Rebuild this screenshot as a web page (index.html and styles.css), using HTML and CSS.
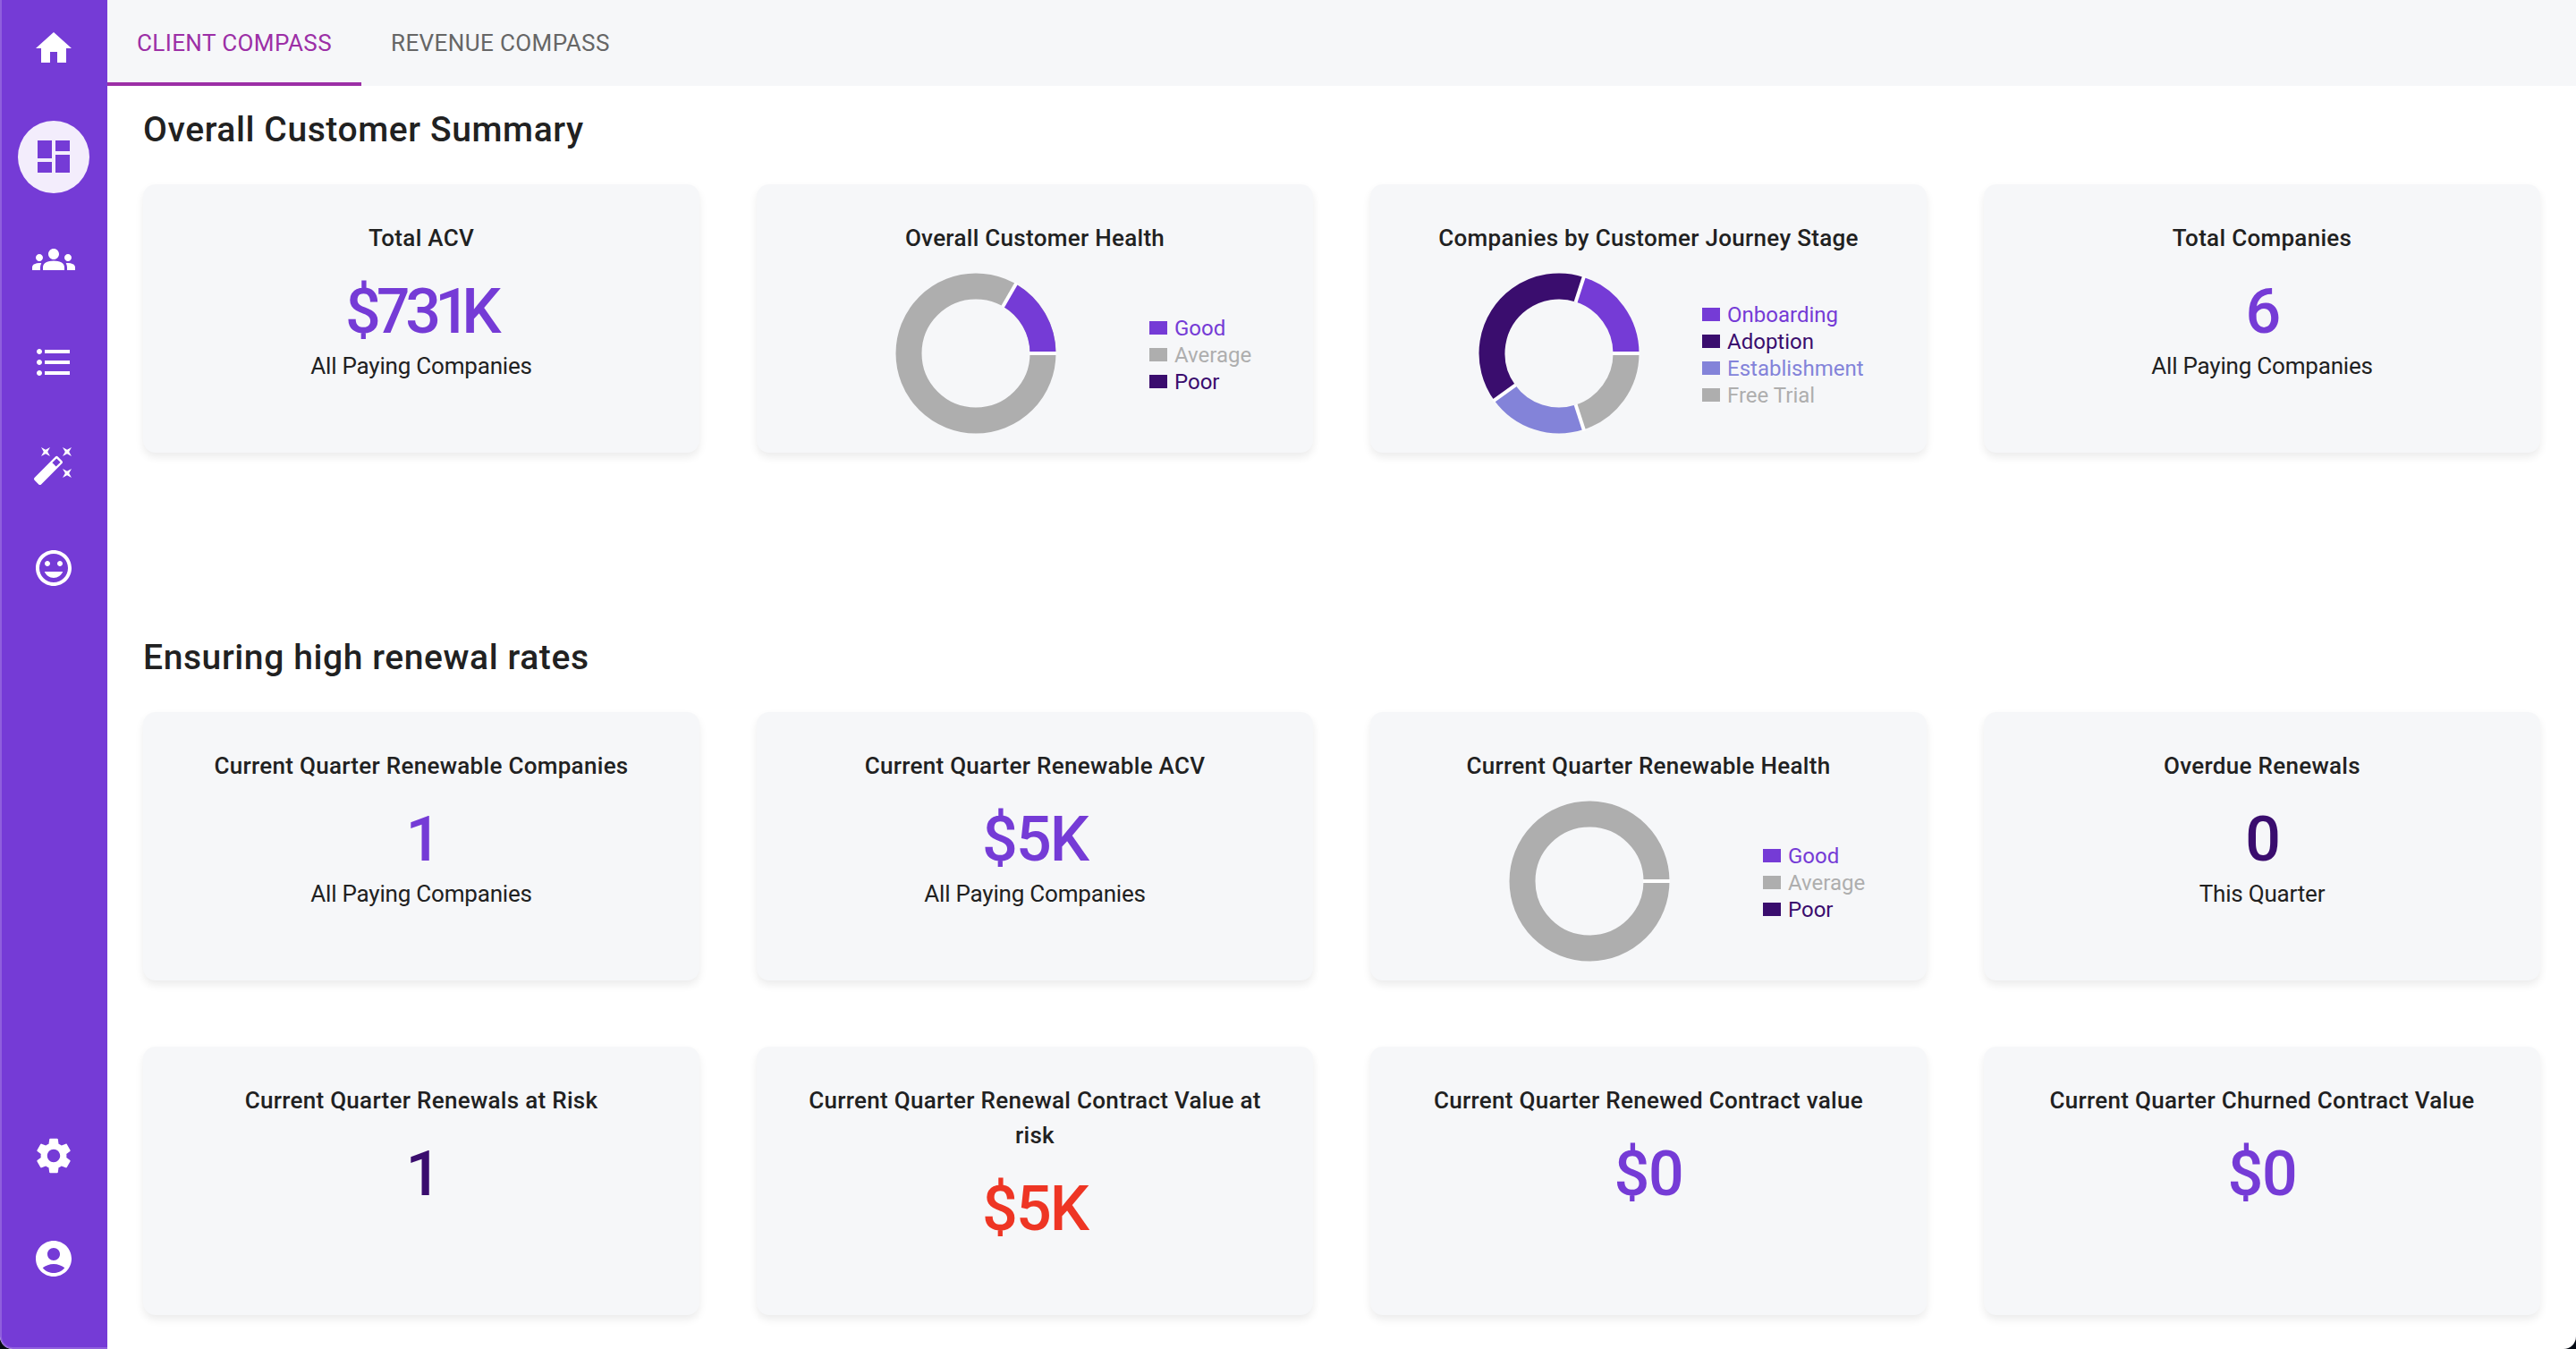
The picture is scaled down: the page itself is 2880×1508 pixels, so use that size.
FILE: index.html
```html
<!DOCTYPE html>
<html>
<head>
    <title>Client Compass</title>
    <link rel="stylesheet" href="styles.css">
</head>
<body>
<div class="app">
    <nav class="sidebar">
        <div class="nav-group">
            <a class="nav-home"><svg class="icon" viewBox="0 0 24 24"><path d="M10 20v-6h4v6h5v-8h3L12 3 2 12h3v8z"/></svg></a>
            <a class="nav-item nav-first"><span class="nav-active"><svg class="icon" viewBox="0 0 24 24"><path d="M3 13h8V3H3v10zm0 8h8v-6H3v6zm10 0h8V11h-8v10zm0-18v6h8V3h-8z"/></svg></span></a>
            <a class="nav-item"><svg class="icon" viewBox="0 0 24 24"><path d="M12 12.75c1.63 0 3.07.39 4.24.9 1.08.48 1.76 1.56 1.76 2.73V18H6v-1.61c0-1.18.68-2.26 1.76-2.73 1.17-.52 2.61-.91 4.24-.91zM4 13c1.1 0 2-.9 2-2s-.9-2-2-2-2 .9-2 2 .9 2 2 2zm1.13 1.1c-.37-.06-.74-.1-1.13-.1-.99 0-1.93.21-2.78.58C.48 14.9 0 15.62 0 16.43V18h4.5v-1.61c0-.83.23-1.61.63-2.29zM20 13c1.1 0 2-.9 2-2s-.9-2-2-2-2 .9-2 2 .9 2 2 2zm4 3.43c0-.81-.48-1.53-1.22-1.85-.85-.37-1.79-.58-2.78-.58-.39 0-.76.04-1.13.1.4.68.63 1.46.63 2.29V18H24v-1.57zM12 6c1.66 0 3 1.34 3 3s-1.34 3-3 3-3-1.34-3-3 1.34-3 3-3z"/></svg></a>
            <a class="nav-item"><svg class="icon" viewBox="0 0 24 24"><path d="M4 10.5c-.83 0-1.5.67-1.5 1.5s.67 1.5 1.5 1.5 1.5-.67 1.5-1.5-.67-1.5-1.5-1.5zm0-6c-.83 0-1.5.67-1.5 1.5S3.17 7.5 4 7.5 5.5 6.83 5.5 6 4.83 4.5 4 4.5zm0 12c-.83 0-1.5.68-1.5 1.5s.68 1.5 1.5 1.5 1.5-.68 1.5-1.5-.67-1.5-1.5-1.5zM7 19h14v-2H7v2zm0-6h14v-2H7v2zm0-8v2h14V5H7z"/></svg></a>
            <a class="nav-item"><svg class="icon" viewBox="0 0 24 24"><path d="M7.5 5.6 10 7 8.6 4.5 10 2 7.5 3.4 5 2l1.4 2.5L5 7zm12 9.8L17 14l1.4 2.5L17 19l2.5-1.4L22 19l-1.4-2.5L22 14zM22 2l-2.5 1.4L17 2l1.4 2.5L17 7l2.5-1.4L22 7l-1.4-2.5zm-7.63 5.29a.9959.9959 0 0 0-1.41 0L1.29 18.96c-.39.39-.39 1.02 0 1.41l2.34 2.34c.39.39 1.02.39 1.41 0L16.7 11.05c.39-.39.39-1.02 0-1.41l-2.33-2.35zm-1.03 5.49-2.12-2.12 2.44-2.44 2.12 2.12-2.44 2.44z"/></svg></a>
            <a class="nav-item"><svg class="icon" viewBox="0 0 24 24"><path d="M11.99 2C6.47 2 2 6.48 2 12s4.47 10 9.99 10C17.52 22 22 17.52 22 12S17.52 2 11.99 2zM12 20c-4.42 0-8-3.58-8-8s3.58-8 8-8 8 3.58 8 8-3.58 8-8 8zm3.5-9c.83 0 1.5-.67 1.5-1.5S16.33 8 15.5 8 14 8.67 14 9.5s.67 1.5 1.5 1.5zm-7 0c.83 0 1.5-.67 1.5-1.5S9.33 8 8.5 8 7 8.67 7 9.5 7.67 11 8.5 11zm3.5 6.5c2.33 0 4.31-1.46 5.11-3.5H6.89c.8 2.04 2.78 3.5 5.11 3.5z"/></svg></a>
        </div>
        <div class="nav-group">
            <a class="nav-item"><svg class="icon" viewBox="0 0 24 24"><path d="M19.14 12.94c.04-.3.06-.61.06-.94 0-.32-.02-.64-.07-.94l2.03-1.58c.18-.14.23-.41.12-.61l-1.92-3.32c-.12-.22-.37-.29-.59-.22l-2.39.96c-.5-.38-1.03-.7-1.62-.94l-.36-2.54c-.04-.24-.24-.41-.48-.41h-3.84c-.24 0-.43.17-.47.41l-.36 2.54c-.59.24-1.13.57-1.62.94l-2.39-.96c-.22-.08-.47 0-.59.22L2.74 8.87c-.12.21-.08.47.12.61l2.03 1.58c-.05.3-.09.63-.09.94s.02.64.07.94l-2.03 1.58c-.18.14-.23.41-.12.61l1.92 3.32c.12.22.37.29.59.22l2.39-.96c.5.38 1.03.7 1.62.94l.36 2.54c.05.24.24.41.48.41h3.84c.24 0 .44-.17.47-.41l.36-2.54c.59-.24 1.13-.56 1.62-.94l2.39.96c.22.08.47 0 .59-.22l1.92-3.32c.12-.22.07-.47-.12-.61l-2.01-1.58zM12 15.6c-1.98 0-3.6-1.62-3.6-3.6s1.62-3.6 3.6-3.6 3.6 1.62 3.6 3.6-1.62 3.6-3.6 3.6z"/></svg></a>
            <a class="nav-item"><svg class="icon" viewBox="0 0 24 24"><path d="M12 2C6.48 2 2 6.48 2 12s4.48 10 10 10 10-4.48 10-10S17.52 2 12 2zm0 4c1.93 0 3.5 1.57 3.5 3.5S13.93 13 12 13s-3.5-1.57-3.5-3.5S10.07 6 12 6zm0 14c-2.03 0-4.43-.82-6.14-2.88C7.55 15.8 9.68 15 12 15s4.45.8 6.14 2.12C16.43 19.18 14.03 20 12 20z"/></svg></a>
        </div>
    </nav>

    <main class="main">
        <div class="tabs">
            <a class="tab tab-active">CLIENT COMPASS</a>
            <a class="tab">REVENUE COMPASS</a>
        </div>

        <section class="content">
            <h2 class="section-title">Overall Customer Summary</h2>
            <div class="grid grid-summary">
                <div class="card">
                    <div class="card-title">Total ACV</div>
                    <div class="card-value value-tight">$731K</div>
                    <div class="card-sub">All Paying Companies</div>
                </div>
                <div class="card">
                    <div class="card-title">Overall Customer Health</div>
                    <div class="chart-row">
                        <svg class="donut" viewBox="-90 -90 180 180">
                            <circle class="ring" r="75" stroke="#aeaeae"/>
                            <circle class="ring" r="75" stroke="#753bd6" pathLength="360" stroke-dasharray="60 300" transform="rotate(-60)"/>
                            <line class="cut" x1="60" x2="91" transform="rotate(-60)"/>
                            <line class="cut" x1="60" x2="91"/>
                        </svg>
                        <ul class="legend">
                            <li class="purple"><i></i>Good</li>
                            <li class="grey"><i></i>Average</li>
                            <li class="dark"><i></i>Poor</li>
                        </ul>
                    </div>
                </div>
                <div class="card">
                    <div class="card-title">Companies by Customer Journey Stage</div>
                    <div class="chart-row chart-row-wide">
                        <svg class="donut" viewBox="-90 -90 180 180">
                            <circle class="ring" r="75" stroke="#753bd6" pathLength="360" stroke-dasharray="72 288" transform="rotate(-72)"/>
                            <circle class="ring" r="75" stroke="#aeaeae" pathLength="360" stroke-dasharray="72 288"/>
                            <circle class="ring" r="75" stroke="#8383d9" pathLength="360" stroke-dasharray="72 288" transform="rotate(72)"/>
                            <circle class="ring" r="75" stroke="#3a0d6e" pathLength="360" stroke-dasharray="144 216" transform="rotate(144)"/>
                            <line class="cut" x1="60" x2="91" transform="rotate(-72)"/>
                            <line class="cut" x1="60" x2="91"/>
                            <line class="cut" x1="60" x2="91" transform="rotate(72)"/>
                            <line class="cut" x1="60" x2="91" transform="rotate(144)"/>
                        </svg>
                        <ul class="legend">
                            <li class="purple"><i></i>Onboarding</li>
                            <li class="dark"><i></i>Adoption</li>
                            <li class="blue"><i></i>Establishment</li>
                            <li class="grey"><i></i>Free Trial</li>
                        </ul>
                    </div>
                </div>
                <div class="card">
                    <div class="card-title">Total Companies</div>
                    <div class="card-value">6</div>
                    <div class="card-sub">All Paying Companies</div>
                </div>
            </div>

            <h2 class="section-title">Ensuring high renewal rates</h2>
            <div class="grid">
                <div class="card">
                    <div class="card-title">Current Quarter Renewable Companies</div>
                    <div class="card-value">1</div>
                    <div class="card-sub">All Paying Companies</div>
                </div>
                <div class="card">
                    <div class="card-title">Current Quarter Renewable ACV</div>
                    <div class="card-value">$5K</div>
                    <div class="card-sub">All Paying Companies</div>
                </div>
                <div class="card">
                    <div class="card-title">Current Quarter Renewable Health</div>
                    <div class="chart-row">
                        <svg class="donut" viewBox="-90 -90 180 180">
                            <circle class="ring" r="75" stroke="#aeaeae"/>
                            <line class="cut" x1="60" x2="91"/>
                        </svg>
                        <ul class="legend">
                            <li class="purple"><i></i>Good</li>
                            <li class="grey"><i></i>Average</li>
                            <li class="dark"><i></i>Poor</li>
                        </ul>
                    </div>
                </div>
                <div class="card">
                    <div class="card-title">Overdue Renewals</div>
                    <div class="card-value value-dark">0</div>
                    <div class="card-sub">This Quarter</div>
                </div>
                <div class="card">
                    <div class="card-title">Current Quarter Renewals at Risk</div>
                    <div class="card-value value-dark">1</div>
                </div>
                <div class="card">
                    <div class="card-title">Current Quarter Renewal Contract Value at risk</div>
                    <div class="card-value value-red">$5K</div>
                </div>
                <div class="card">
                    <div class="card-title">Current Quarter Renewed Contract value</div>
                    <div class="card-value">$0</div>
                </div>
                <div class="card">
                    <div class="card-title">Current Quarter Churned Contract Value</div>
                    <div class="card-value">$0</div>
                </div>
            </div>
        </section>
    </main>
</div>
</body>
</html>
```

FILE: styles.css
```css
* {
    box-sizing: border-box;
}
html, body {
    margin: 0;
    height: 100%;
    overflow: hidden;
    background-color: #050a14;
}
body {
    font-family: "Roboto", "Liberation Sans", sans-serif;
    color: #212121;
}
.app {
    display: flex;
    height: 1508px;
    background-color: #fff;
    border-radius: 0 0 14px 14px;
    overflow: hidden;
}

/* sidebar */
.sidebar {
    width: 120px;
    flex-shrink: 0;
    display: flex;
    flex-direction: column;
    justify-content: space-between;
    background-color: #753bd6;
    border-left: 2px solid #8f5fdd;
    border-bottom: 2px solid #8f5fdd;
    border-bottom-left-radius: 14px;
    padding: 30px 0 42px;
}
.nav-group {
    display: flex;
    flex-direction: column;
    margin-left: -2px;
}
.icon {
    width: 48px;
    height: 48px;
    fill: #fff;
    display: block;
}
.nav-home, .nav-item {
    display: flex;
    align-items: center;
    justify-content: center;
}
.nav-home {
    height: 48px;
}
.nav-item {
    height: 115px;
}
.nav-first {
    height: 114px;
    margin-top: 40px;
}
.nav-active {
    width: 80px;
    height: 81px;
    border-radius: 50%;
    background-color: #f3edfc;
    display: flex;
    align-items: center;
    justify-content: center;
}
.nav-active .icon {
    fill: #753bd6;
}

/* tabs */
.main {
    flex: 1;
    min-width: 0;
}
.tabs {
    display: flex;
    height: 96px;
    background-color: #f6f7f9;
}
.tab {
    height: 96px;
    padding: 0 33px;
    font-size: 26px;
    letter-spacing: 0.4px;
    line-height: 96px;
    color: #666;
}
.tab-active {
    color: #9c2fa6;
    border-bottom: 4px solid #9c2fa6;
}

/* content */
.content {
    padding: 0 40px;
}
.section-title {
    margin: 0;
    height: 110px;
    font-size: 39px;
    font-weight: 500;
    letter-spacing: 0.6px;
    line-height: 98px;
}
.grid {
    display: grid;
    grid-template-columns: repeat(4, 1fr);
    gap: 74px 64px;
}
.grid-summary {
    margin-bottom: 180px;
}
.card {
    height: 300px;
    padding: 41px 40px 0;
    background-color: #f6f7f9;
    border-radius: 14px;
    box-shadow: 0 5px 10px rgba(0,0,0,0.08);
    text-align: center;
}
.card-title {
    font-size: 26px;
    font-weight: 500;
    letter-spacing: 0.3px;
    line-height: 39px;
}
.card-value {
    margin-top: 19px;
    font-size: 70px;
    font-weight: 500;
    letter-spacing: -2px;
    font-variant-numeric: proportional-nums;
    line-height: 86px;
    color: #753bd6;
}
.value-tight {
    letter-spacing: -4.5px;
}
.value-dark {
    color: #3a0d6e;
}
.value-red {
    color: #ee3524;
}
.card-sub {
    margin-top: 3px;
    font-size: 26px;
    letter-spacing: -0.2px;
    line-height: 30px;
}

/* doughnut charts */
.chart-row {
    display: flex;
    align-items: center;
    margin: 19px -40px 0;
    padding-left: 155px;
    gap: 104px;
}
.chart-row-wide {
    padding-left: 121px;
    gap: 70px;
}
.donut {
    width: 180px;
    height: 180px;
    flex-shrink: 0;
}
.ring {
    fill: none;
    stroke-width: 29;
}
.cut {
    stroke: #fff;
    stroke-width: 4;
}
.legend {
    margin: 3px 0 0;
    padding: 0;
    list-style: none;
    text-align: left;
    font-size: 24px;
    line-height: 30px;
}
.legend li {
    display: flex;
    align-items: center;
    gap: 8px;
}
.legend i {
    width: 20px;
    height: 15px;
    background-color: currentColor;
}
.purple { color: #753bd6; }
.grey { color: #aeaeae; }
.dark { color: #3a0d6e; }
.blue { color: #8383d9; }
```
